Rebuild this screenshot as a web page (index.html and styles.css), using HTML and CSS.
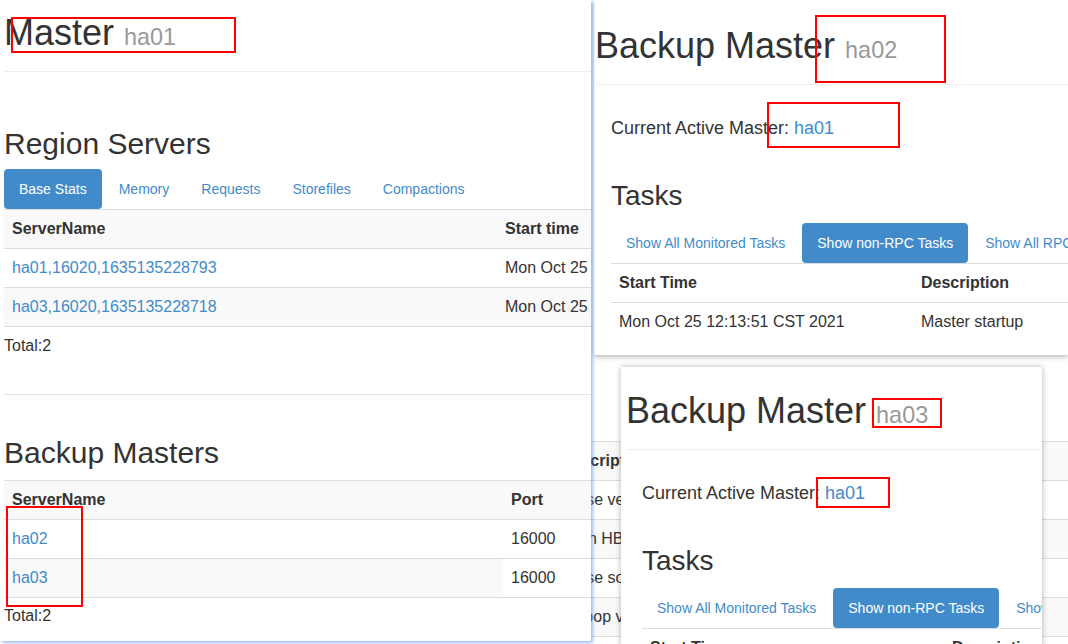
FILE: index.html
```html
<!DOCTYPE html>
<html>
<head>
<meta charset="utf-8">
<title>HBase Master</title>
<link rel="stylesheet" href="styles.css">
</head>
<body>
<div class="desk">

  <div class="win bg-layer">
    <table class="tbl striped bg-tbl">
      <tr><th>Description</th></tr>
      <tr><td>HBase version and revision</td></tr>
      <tr><td>When HBase version was compiled and by whom</td></tr>
      <tr><td>HBase source SHA512 checksum</td></tr>
      <tr><td>Hadoop version and revision</td></tr>
      <tr><td>When Hadoop version was compiled and by whom</td></tr>
    </table>
  </div>

  <div class="win win-tr">
    <div class="bm">
      <div class="bm-head"><h1>Backup Master <small>ha02</small></h1></div>
      <div class="bm-body">
        <p class="cam">Current Active Master: <a href="#">ha01</a></p>
        <h2 class="tasks">Tasks</h2>
        <ul class="pills">
          <li><a href="#">Show All Monitored Tasks</a></li>
          <li class="active"><a href="#">Show non-RPC Tasks</a></li>
          <li><a href="#">Show All RPC Tasks</a></li>
          <li><a href="#">Show Active RPC Tasks</a></li>
        </ul>
        <table class="tbl task-tbl">
          <tr><th class="c-start">Start Time</th><th>Description</th></tr>
          <tr><td>Mon Oct 25 12:13:51 CST 2021</td><td>Master startup</td></tr>
        </table>
      </div>
    </div>
  </div>

  <div class="win win-br">
    <div class="bm bm-br">
      <div class="bm-head"><h1>Backup Master <small>ha03</small></h1></div>
      <div class="bm-body">
        <p class="cam">Current Active Master: <a href="#">ha01</a></p>
        <h2 class="tasks">Tasks</h2>
        <ul class="pills">
          <li><a href="#">Show All Monitored Tasks</a></li>
          <li class="active"><a href="#">Show non-RPC Tasks</a></li>
          <li><a href="#">Show All RPC Tasks</a></li>
        </ul>
        <table class="tbl task-tbl">
          <tr><th class="c-start">Start Time</th><th>Description</th></tr>
          <tr><td>Mon Oct 25 12:14:02 CST 2021</td><td>Master startup</td></tr>
        </table>
      </div>
    </div>
  </div>

  <div class="win win-left">
    <div class="lh"><h1>Master <small>ha01</small></h1></div>

    <h2 class="sec sec-rs">Region Servers</h2>
    <ul class="pills pills-rs">
      <li class="active"><a href="#">Base Stats</a></li>
      <li><a href="#">Memory</a></li>
      <li><a href="#">Requests</a></li>
      <li><a href="#">Storefiles</a></li>
      <li><a href="#">Compactions</a></li>
    </ul>
    <table class="tbl striped rs-tbl">
      <tr><th class="c-rs">ServerName</th><th>Start time</th></tr>
      <tr><td><a href="#">ha01,16020,1635135228793</a></td><td>Mon Oct 25 12:13:48 CST 2021</td></tr>
      <tr><td><a href="#">ha03,16020,1635135228718</a></td><td>Mon Oct 25 12:13:48 CST 2021</td></tr>
    </table>
    <p class="total">Total:2</p>

    <hr class="sep">

    <h2 class="sec sec-bm">Backup Masters</h2>
    <table class="tbl striped bmt-tbl">
      <tr><th class="c-bm">ServerName</th><th>Port</th><th>Start Time</th></tr>
      <tr><td><a href="#">ha02</a></td><td>16000</td><td>Mon Oct 25 12:14:01 CST 2021</td></tr>
      <tr><td><a href="#">ha03</a></td><td class="cut">16000</td><td class="cut">Mon Oct 25 12:14:02 CST 2021</td></tr>
    </table>
    <p class="total total-bm">Total:2</p>
  </div>

  <div class="mark m1"></div>
  <div class="mark m2"></div>
  <div class="mark m3"></div>
  <div class="mark m4"></div>
  <div class="mark m5"></div>
  <div class="mark m6"></div>
</div>
</body>
</html>
```

FILE: styles.css
```css
* { box-sizing: border-box; }
html, body { margin: 0; padding: 0; }
body {
  width: 1068px;
  height: 644px;
  overflow: hidden;
  background: #fff;
  font-family: "Liberation Sans", Arial, Helvetica, sans-serif;
  font-size: 14px;
  line-height: 20px;
  color: #333;
}
a { color: #428bca; text-decoration: none; }

.desk { position: relative; width: 1068px; height: 644px; overflow: hidden; background: #fff; }

/* windows of the collage */
.win { position: absolute; background: #fff; overflow: hidden; }
.bg-layer { left: 591px; top: 355px; width: 477px; height: 289px; padding-top: 86px; z-index: 1; }
.win-tr { left: 594px; top: 0; width: 474px; height: 355px; box-shadow: 0 2px 5px rgba(0,0,0,0.28); z-index: 2; }
.win-br { left: 621px; top: 367px; width: 421px; height: 290px; padding-left: 4px; box-shadow: 0 0 6px rgba(0,0,0,0.3); z-index: 3; }
.win-left { left: 0; top: 0; width: 591px; height: 641px; padding-left: 4px; box-shadow: 2px 2px 3px rgba(80,140,230,0.55); z-index: 4; }

h1 { margin: 0; height: 40px; font-size: 36px; line-height: 40px; font-weight: normal; white-space: nowrap; }
h1 small { font-size: 65%; line-height: 20px; color: #999; font-weight: normal; }
h2 { margin: 0; font-weight: normal; white-space: nowrap; }

/* tables */
.tbl { border-collapse: collapse; table-layout: fixed; font-size: 16px; line-height: 22px; white-space: nowrap; }
.tbl th, .tbl td { padding: 8px; border-top: 1px solid #ddd; text-align: left; vertical-align: top; overflow: hidden; }
.tbl th { font-weight: bold; }
.striped tr:nth-child(odd) > * { background: #f9f9f9; }
.tbl tr:last-child > td { border-bottom: 1px solid #ddd; }
.tbl td.cut { background: #fff !important; border-bottom-color: #fff; }

/* pills */
.pills { display: flex; list-style: none; margin: 0; padding: 0; white-space: nowrap; font-size: 14px; line-height: 20px; }
.pills li + li { margin-left: 2px; }
.pills a { display: block; padding: 10px 15px; border-radius: 4px; color: #428bca; }
.pills .active a { background: #428bca; color: #fff; }

/* left window */
.lh { padding: 13px 0 18px; border-bottom: 1px solid #eee; width: 700px; }
.sec { font-size: 30px; line-height: 33px; }
.sec-rs { margin-top: 55px; }
.pills-rs { margin-top: 9px; }
.rs-tbl { width: 760px; }
.c-rs { width: 493px; }
.total { margin: 8px 0 0; font-size: 16px; line-height: 22px; }
.sep { margin: 37px 0 0; border: 0; border-top: 1px solid #e3e3e3; height: 0; width: 700px; }
.sec-bm { margin-top: 41px; }
.bmt-tbl { width: 900px; margin-top: 11px; }
.c-bm { width: 499px; }
.bmt-tbl th:nth-child(2) { width: 120px; }
.total-bm { margin-top: 7px; }

/* backup master windows */
.bm-head { margin-left: 2px; padding: 26px 0 18px; border-bottom: 1px solid #eee; }
.bm-head h1 { margin-left: -1px; }
.bm-br .bm-head { padding-top: 24px; }
.bm-body { padding-left: 17px; }
.cam { margin: 30px 0 0; font-size: 18px; line-height: 26px; white-space: nowrap; }
.tasks { margin-top: 39px; font-size: 28px; line-height: 31px; }
.bm-body .pills { margin-top: 12px; }
.task-tbl { width: 700px; }
.c-start { width: 302px; }
.task-tbl tr:last-child > td { border-bottom: 0; }

/* background table behind windows */
.bg-tbl { width: 700px; margin-left: -38px; }
.bg-tbl td { padding-left: 2px; }

/* red annotation boxes */
.mark { position: absolute; border: 2px solid #f00; z-index: 10; }
.m1 { left: 11px; top: 17px; width: 225px; height: 36px; }
.m2 { left: 815px; top: 15px; width: 131px; height: 68px; }
.m3 { left: 767px; top: 102px; width: 133px; height: 46px; }
.m4 { left: 872px; top: 398px; width: 70px; height: 30px; }
.m5 { left: 816px; top: 477px; width: 74px; height: 31px; }
.m6 { left: 6px; top: 506px; width: 77px; height: 101px; }
```
